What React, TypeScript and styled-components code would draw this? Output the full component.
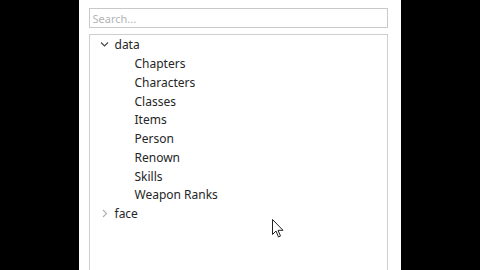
import styled, { createGlobalStyle } from "styled-components";

const GlobalStyle = createGlobalStyle`
    html, body {
        margin: 0;
        padding: 0;
        background: #000;
        overflow: hidden;
    }
`;

const Screen = styled.div`
    width: 480px;
    height: 270px;
    display: flex;
    justify-content: center;
    background: #000;
    position: relative;
    overflow: hidden;
`;

const Panel = styled.div`
    width: 322px;
    margin-left: -1px;
    background: #fff;
    padding: 8px 13px 0 10px;
    box-sizing: border-box;
    display: flex;
    flex-direction: column;
    gap: 6px;
    font-family: "Noto Sans", "Open Sans", sans-serif;
`;

const Search = styled.input`
    height: 20px;
    box-sizing: border-box;
    border: 1px solid #c9c9c9;
    padding: 0 3px;
    font-family: inherit;
    font-size: 11px;
    color: #333;
    outline: none;

    &::placeholder {
        color: #b4b4b4;
    }
`;

const Tree = styled.div`
    flex: 1;
    border: 1px solid #cfcfcf;
    border-bottom: none;
    padding-top: 0.5px;
`;

const Row = styled.div<{ $depth: number }>`
    height: 18.75px;
    display: flex;
    align-items: center;
    padding-left: ${p => (p.$depth === 0 ? 4 : 45)}px;
    font-size: 12px;
    color: #262626;
    white-space: nowrap;
`;

const Toggle = styled.span`
    width: 21px;
    display: flex;
    align-items: center;
    justify-content: center;
`;

const Cursor = styled.svg`
    position: absolute;
    left: 272px;
    top: 219px;
`;

const Chevron = ({ open }: { open: boolean }) => (
    <svg width="9" height="9" viewBox="0 0 9 9">
        {open
            ? <path d="M1 2.5 L4.5 6 L8 2.5" fill="none" stroke="#444" strokeWidth="1.1" />
            : <path d="M3 1 L6.5 4.5 L3 8" fill="none" stroke="#b0b0b0" strokeWidth="1.1" />}
    </svg>
);

const children = ["Chapters", "Characters", "Classes", "Items", "Person", "Renown", "Skills", "Weapon Ranks"];

export default function App() {
    return (
        <Screen>
            <GlobalStyle />
            <Panel>
                <Search placeholder="Search..." />
                <Tree>
                    <Row $depth={0}><Toggle><Chevron open={true} /></Toggle>data</Row>
                    {children.map(name => <Row $depth={1} key={name}>{name}</Row>)}
                    <Row $depth={0}><Toggle><Chevron open={false} /></Toggle>face</Row>
                </Tree>
            </Panel>
            <Cursor width="13" height="20" viewBox="0 0 13 20">
                <path d="M0.5 0.5 L0.5 15.5 L4 12 L6.5 18 L8.5 17 L6 11.3 L11 11.3 Z" fill="#fff" stroke="#222" strokeWidth="1" strokeLinejoin="round" />
            </Cursor>
        </Screen>
    );
}
